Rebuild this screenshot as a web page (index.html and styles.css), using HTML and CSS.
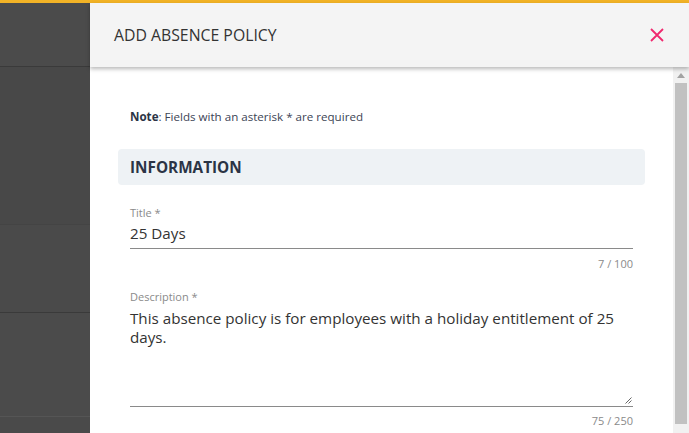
FILE: index.html
```html
<!DOCTYPE html>
<html lang="en">
<head>
<meta charset="utf-8">
<title>Add Absence Policy</title>
<link rel="stylesheet" href="styles.css">
</head>
<body>
<div class="topbar"></div>
<div class="screen">
  <div class="backdrop">
    <div class="bd-row bd-head"></div>
    <div class="bd-row bd-r1"></div>
    <div class="bd-row bd-r2"></div>
    <div class="bd-row bd-r3"></div>
    <div class="bd-row bd-r4"></div>
  </div>
  <aside class="panel">
    <header class="panel-head">
      <h1 class="panel-title">ADD ABSENCE POLICY</h1>
      <button class="close" aria-label="Close">
        <svg width="14" height="14" viewBox="0 0 14 14"><path d="M1 1 L13 13 M13 1 L1 13" stroke="#f0286e" stroke-width="1.8" fill="none"/></svg>
      </button>
    </header>
    <div class="panel-body">
      <div class="content">
        <p class="note"><b>Note</b>: Fields with an asterisk * are required</p>
        <div class="section">INFORMATION</div>
        <div class="field field-title">
          <label class="label">Title *</label>
          <div class="input">25 Days</div>
          <div class="counter">7 / 100</div>
        </div>
        <div class="field field-desc">
          <label class="label">Description *</label>
          <div class="textarea">This absence policy is for employees with a holiday entitlement of 25 days.
            <svg class="grip" width="7" height="7" viewBox="0 0 7 7"><path d="M6.5 0.5 L0.5 6.5 M6.5 3.5 L3.5 6.5" stroke="#666" stroke-width="1" fill="none"/></svg>
          </div>
          <div class="counter">75 / 250</div>
        </div>
      </div>
      <div class="scrollbar">
        <div class="sb-arrow"><svg width="8" height="5" viewBox="0 0 8 5"><path d="M0 5 L4 0 L8 5 Z" fill="#a3a3a3"/></svg></div>
        <div class="sb-thumb"></div>
      </div>
    </div>
  </aside>
</div>
</body>
</html>
```

FILE: styles.css
```css
* { box-sizing: border-box; }
html, body { margin: 0; padding: 0; }
body {
  width: 689px;
  height: 433px;
  overflow: hidden;
  font-family: "Open Sans", "Noto Sans", sans-serif;
  background: #4a4a4a;
}
.topbar { height: 3px; background: #f2b326; }
.screen { display: flex; height: 430px; }
.backdrop {
  width: 90px;
  display: flex;
  flex-direction: column;
  background: #4a4a4a;
  box-shadow: inset -3px 0 4px -2px rgba(0,0,0,0.25);
}
.bd-row { border-bottom: 1px solid #3f3f3f; }
.bd-head { height: 64px; background: #4b4b4b; border-bottom-color: #3a3a3a; }
.bd-r1 { height: 158px; background: #484848; border-bottom-color: #444; }
.bd-r2 { height: 88px; background: #4a4a4a; border-bottom-color: #3a3a3a; }
.bd-r3 { height: 104px; background: #4b4b4b; border-bottom-color: #555; }
.bd-r4 { flex: 1; background: #4a4a4a; border-bottom: 0; }

.panel {
  flex: 1;
  display: flex;
  flex-direction: column;
  background: #fff;
}
.panel-head {
  height: 64px;
  flex: none;
  background: #f4f4f4;
  display: flex;
  align-items: center;
  justify-content: space-between;
  padding: 0 25px 0 24px;
  box-shadow: 0 2px 4px rgba(0,0,0,0.28);
  position: relative;
  z-index: 1;
}
.panel-title {
  margin: 0;
  font-size: 15.8px;
  font-weight: 400;
  color: #333;
}
.close {
  border: 0;
  background: none;
  padding: 0;
  width: 14px;
  height: 14px;
  display: flex;
}
.panel-body {
  flex: 1;
  display: flex;
  min-height: 0;
}
.content {
  flex: 1;
  padding: 42px 28px 0 28px;
}
.note {
  margin: 0 0 24px 12px;
  font-size: 11.6px;
  color: #3c4455;
  line-height: 16px;
}
.note b { font-weight: 700; color: #2b3445; }
.section {
  height: 36px;
  background: #eef2f5;
  border-radius: 4px;
  padding: 0 12px;
  display: flex;
  align-items: center;
  font-size: 15.3px;
  font-weight: 700;
  color: #2b3445;
}
.field { margin: 0 12px; }
.field-title { margin-top: 20px; }
.label {
  display: block;
  font-size: 11px;
  color: #8a8a8a;
  line-height: 16px;
}
.input {
  font-size: 15.2px;
  color: #333;
  line-height: 22px;
  padding: 1px 0 4px;
  border-bottom: 1px solid #8a8a8a;
}
.counter {
  text-align: right;
  font-size: 11px;
  color: #8a8a8a;
  line-height: 16px;
  margin-top: 7px;
}
.field-desc { margin-top: 17px; }
.textarea {
  position: relative;
  height: 102px;
  font-size: 15.2px;
  color: #333;
  line-height: 19px;
  padding-top: 4px;
  border-bottom: 1px solid #8a8a8a;
}
.grip { position: absolute; right: 1px; bottom: 2px; }
.field-desc .counter { margin-top: 6px; }

.scrollbar {
  width: 16px;
  flex: none;
  background: #f1f1f1;
  display: flex;
  flex-direction: column;
  align-items: center;
}
.sb-arrow {
  height: 16px;
  display: flex;
  align-items: center;
  justify-content: center;
}
.sb-thumb {
  width: 12px;
  height: 341px;
  background: #c1c1c1;
}
```
